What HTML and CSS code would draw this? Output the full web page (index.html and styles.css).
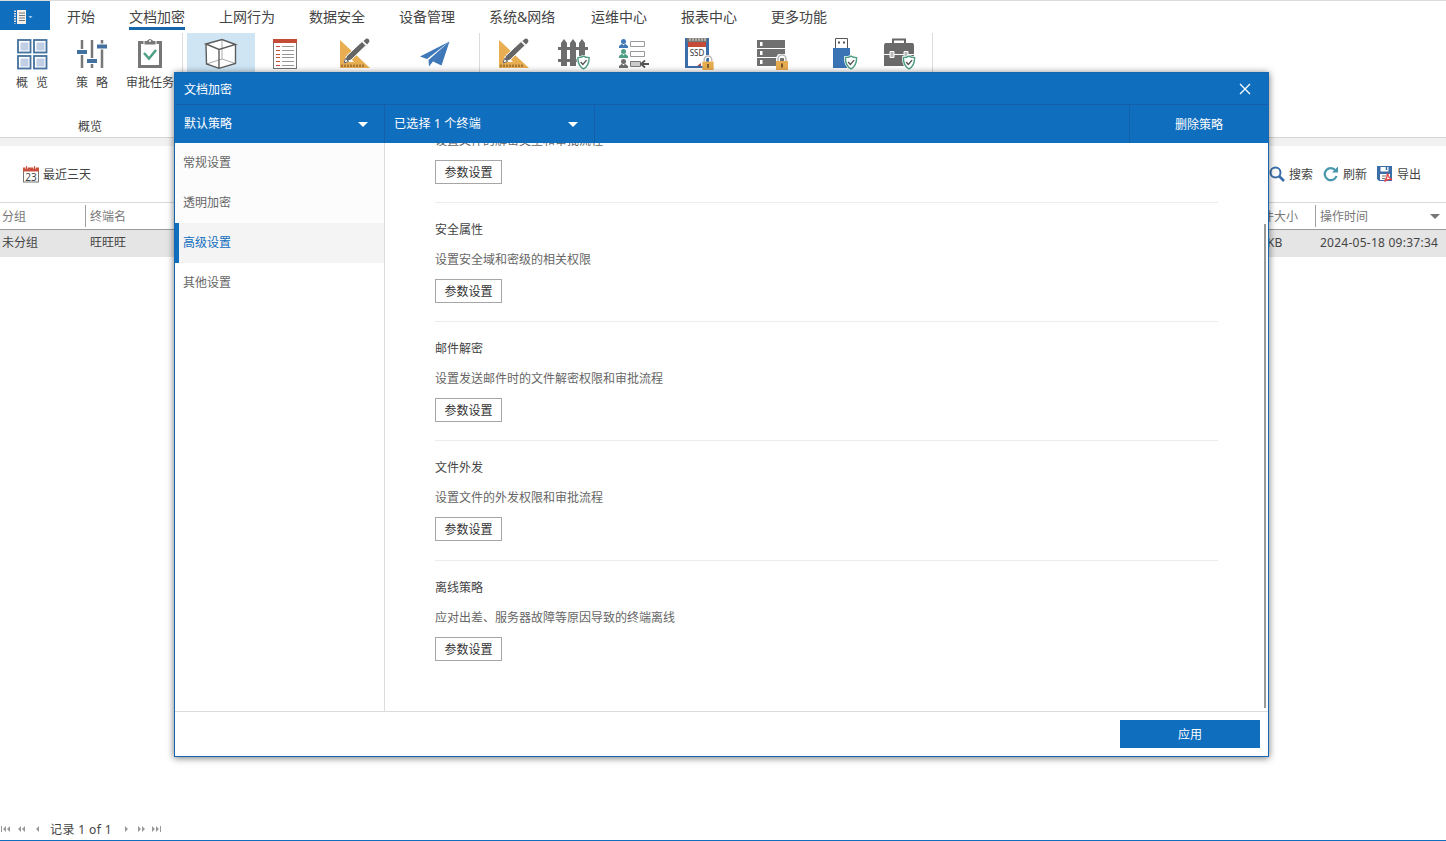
FILE: index.html
```html
<!DOCTYPE html>
<html lang="zh-CN">
<head>
    <meta charset="UTF-8">
    <meta name="viewport" content="width=device-width, initial-scale=1.0">
    <title>文档加密</title>
    <link rel="stylesheet" href="styles.css">
</head>
<body>
    <svg class="defs" width="0" height="0">
        <symbol id="design" viewBox="0 0 32 32">
            <path d="M1 2v28h30zM8 16l7 8H8z" fill="#e9ad52" fill-rule="evenodd"/>
            <path d="M3 29v-2.500M6 29v-2.500M9 29v-2.500M12 29v-2.500M15 29v-2.500M18 29v-2.500M21 29v-2.500M24 29v-2.500" stroke="#6b4b1c"/>
            <path d="M5 25l2.500-7L23 3.500l4 4L12 22z" fill="#666" stroke="#fff"/>
            <path d="M24.500 3l2.500-2.300q2-.5 3 1t0 2.500L28 6.500z" fill="#666"/>
            <path d="M5 25l1.500-4.500 3 3z" fill="#fff" stroke="#666"/>
        </symbol>
        <symbol id="shield" viewBox="0 0 16 16">
            <path d="M8 1.200c2 1.300 4 1.600 6 1.600 0 6-1.500 9.500-6 12-4.500-2.500-6-6-6-12 2 0 4-.3 6-1.600z" fill="#fff" stroke="#fff" stroke-width="3"/>
            <path d="M8 1.200c2 1.300 4 1.600 6 1.600 0 6-1.500 9.500-6 12-4.500-2.500-6-6-6-12 2 0 4-.3 6-1.600z" fill="#fff" stroke="#4f9f83" stroke-width="1.500"/>
            <path d="M5 7.500l2.300 2.500 4-4.500" fill="none" stroke="#555" stroke-width="1.500"/>
        </symbol>
        <symbol id="lock" viewBox="0 0 14 16">
            <path d="M3 7V5a4 4 0 0 1 8 0v2" fill="none" stroke="#fff" stroke-width="4"/>
            <path d="M3 7V5a4 4 0 0 1 8 0v2" fill="none" stroke="#bbb" stroke-width="1.600"/>
            <rect x="1" y="7" width="12" height="9" fill="#e8ad50"/>
            <path d="M7 9.500v4" stroke="#77592a" stroke-width="2"/>
        </symbol>
        <symbol id="person" viewBox="0 0 9 9">
            <circle cx="4.500" cy="2.500" r="2.500"/>
            <path d="M0 9V7l3-2.200 1.500 1.700L6 4.800 9 7v2z"/>
        </symbol>
    </svg>

    <div class="tabs">
        <div class="app-btn">
            <svg width="22" height="14" viewBox="0 0 22 14">
                <path d="M2 .5v13" stroke="#ddd" stroke-width="2" stroke-dasharray="1.500 1"/>
                <rect x="4" y="0" width="9" height="14" fill="#f5efe6"/>
                <path d="M6 3h6M6 5.500h6M6 8h6M6 10.500h6" stroke="#6d7884"/>
                <path d="M15.500 6h4l-2 2.500z" fill="#9cc4e8"/>
            </svg>
        </div>
        <span class="tab">开始</span>
        <span class="tab active">文档加密</span>
        <span class="tab">上网行为</span>
        <span class="tab">数据安全</span>
        <span class="tab">设备管理</span>
        <span class="tab wide">系统&amp;网络</span>
        <span class="tab">运维中心</span>
        <span class="tab">报表中心</span>
        <span class="tab">更多功能</span>
    </div>

    <div class="ribbon">
        <div class="group first">
            <div class="tools">
                <div class="tool w60">
                    <svg width="32" height="32" viewBox="0 0 32 32">
                        <g fill="#fff" stroke="#43719f" stroke-width="1.800">
                            <rect x="2" y="2" width="12.500" height="12.500"/><rect x="18" y="2" width="12.500" height="12.500"/>
                            <rect x="2" y="18" width="12.500" height="12.500"/><rect x="18" y="18" width="12.500" height="12.500"/>
                        </g>
                        <path d="M4.500 4.500h8v8h-8zM20.500 4.500h8v8h-8zM4.500 20.500h8v8h-8zM20.500 20.500h8v8h-8z" fill="#c0cfe6"/>
                    </svg>
                    <span class="spaced">概 览</span>
                </div>
                <div class="tool w60">
                    <svg width="32" height="32" viewBox="0 0 32 32">
                        <path d="M6 2v28M16 2v28M26 2v28" stroke="#777" stroke-width="2.500"/>
                        <path d="M1 14h10M11 23h10M21 8.500h10" stroke="#fff" stroke-width="6"/>
                        <path d="M1 14h10M11 23h10M21 8.500h10" stroke="#43719f" stroke-width="4"/>
                    </svg>
                    <span class="spaced">策 略</span>
                </div>
                <div class="tool w56">
                    <svg width="32" height="32" viewBox="0 0 32 32">
                        <path d="M5.500 4.500h21v24h-21z" fill="#fff" stroke="#777" stroke-width="3"/>
                        <path d="M10 2.500h3q3-4 6 0h3V7H10z" fill="#777" stroke="#fff"/>
                        <circle cx="16" cy="3" r="1" fill="#fff"/>
                        <path d="M10 15l5 5.500 7-8.500" fill="none" stroke="#4f9f83" stroke-width="2.500"/>
                    </svg>
                    <span>审批任务</span>
                </div>
            </div>
            <div class="group-name">概览</div>
        </div>
        <div class="group second">
            <div class="tool selected">
                <svg width="34" height="32" viewBox="0 0 34 32">
                    <path d="M2 6l16-4.500 13.500 5v19L15 30.300 2.500 26z" fill="#fff"/>
                    <path d="M18 2v19L2.500 26M18 21l13.500 4.500" fill="none" stroke="#aaa"/>
                    <path d="M2 6l16-4.500 13.500 5L15 11.500zM15 11.500v18.800M2 6l.5 20L15 30.300l16.500-4.800v-19" fill="none" stroke="#5d5d5d" stroke-width="1.400"/>
                </svg>
            </div>
            <div class="tool w60">
                <svg width="26" height="32" viewBox="0 0 26 32">
                    <rect x="1.500" y="2" width="23" height="28.500" fill="#fff" stroke="#777"/>
                    <path d="M1 1h24v4H1z" fill="#c44b38"/>
                    <path d="M4 8.500h4M4 12.500h4M4 16.500h4M4 19.500h4M4 23.500h4M4 27.500h4" stroke="#c44b38"/>
                    <path d="M10 8.500h12M10 12.500h12M10 16.500h12M10 19.500h12M10 23.500h12M10 27.500h12" stroke="#999"/>
                </svg>
            </div>
            <div class="tool w80"><svg width="32" height="32"><use href="#design"/></svg></div>
            <div class="tool w80">
                <svg width="32" height="32" viewBox="0 0 32 32">
                    <path d="M30.500 3.500L1 18.500l7 2.500zM30.500 3.500L9.500 22l.5 6.500 3.500-4.500zM30.500 3.500L14 23.500l8.500 4z" fill="#3f78b8"/>
                </svg>
            </div>
        </div>
        <div class="group third">
            <div class="tool w60"><svg width="32" height="32"><use href="#design"/></svg></div>
            <div class="tool w60">
                <svg width="34" height="32" viewBox="0 0 34 32">
                    <path d="M1 10.500h30M1 22.500h30" stroke="#6d6d6d" stroke-width="3"/>
                    <path d="M4 28V5l3-4 3 4v23zM13 28V5l3-4 3 4v23zM22 28V5l3-4 3 4v23z" fill="#6d6d6d"/>
                    <use href="#shield" x="19" y="17" width="15" height="15"/>
                </svg>
            </div>
            <div class="tool w60">
                <svg width="32" height="32" viewBox="0 0 32 32">
                    <use href="#person" x="1" y="1" width="9" height="9" fill="#3f78b8"/>
                    <use href="#person" x="1" y="11" width="9" height="9" fill="#4f9f83"/>
                    <use href="#person" x="1" y="21" width="9" height="9" fill="#6d6d6d"/>
                    <path d="M12.500 3.500h14v5h-14zM12.500 13.500h14v5h-14z" fill="#fff" stroke="#999"/>
                    <path d="M12.500 23.500h10v5h-10z" fill="#ccc" stroke="#777"/>
                    <path d="M31 26h-8M27 22.500L23 26l4 3.500" fill="none" stroke="#555" stroke-width="1.800"/>
                </svg>
            </div>
            <div class="tool w70">
                <svg width="32" height="34" viewBox="0 0 32 34">
                    <rect x="2" y="0" width="24" height="30" fill="#3b6da8"/>
                    <rect x="5" y="9" width="18" height="19" fill="#fff"/>
                    <rect x="4" y="0" width="20" height="4" fill="#777"/>
                    <path d="M7 0v3M10 0v3M13 0v3M16 0v3M19 0v3M22 0v3" stroke="#e8e0cf"/>
                    <rect x="5" y="4" width="18" height="5" fill="#c44b38"/>
                    <text class="ssd" x="14" y="18" text-anchor="middle">SSD</text>
                    <path d="M14 28l4-3v3z" fill="#a34a4a"/>
                    <use href="#lock" x="18" y="17" width="14" height="15"/>
                </svg>
            </div>
            <div class="tool w76">
                <svg width="34" height="34" viewBox="0 0 34 34">
                    <path d="M2 2h28v8H2zM2 11h28v8H2zM2 20h28v8H2z" fill="#707070"/>
                    <path d="M5 4h2.500v4H5zM5 13h2.500v4H5zM5 22h2.500v4H5z" fill="#fff"/>
                    <use href="#lock" x="20" y="16" width="14" height="16"/>
                </svg>
            </div>
            <div class="tool w70">
                <svg width="28" height="34" viewBox="0 0 28 34">
                    <path d="M4.500 10V.5h12V10" fill="#fff" stroke="#555"/>
                    <path d="M7 3.500h2v2H7zM12 3.500h2v2h-2z" fill="#555"/>
                    <rect x="2" y="10" width="17" height="20" fill="#3b74b4"/>
                    <use href="#shield" x="12" y="17" width="16" height="15"/>
                </svg>
            </div>
            <div class="tool w40">
                <svg width="34" height="34" viewBox="0 0 34 34">
                    <path d="M10 6V1.500h12V6" fill="none" stroke="#666" stroke-width="2"/>
                    <path d="M1 7l1-2h28l1 2v21H1z" fill="#6a6a6a"/>
                    <path d="M1 16.500h30" stroke="#fff"/>
                    <path d="M7 13.500h4v6H7zM21 13.500h4v6h-4z" fill="#bbb" stroke="#fff"/>
                    <use href="#shield" x="18" y="17" width="16" height="15"/>
                </svg>
            </div>
        </div>
    </div>

    <div class="toolbar">
        <div class="action range">
            <svg width="17" height="17" viewBox="0 0 17 17">
                <rect x="1.500" y="2.500" width="15" height="13.500" fill="#fff" stroke="#777"/>
                <path d="M1 1.500h16v4H1z" fill="#c9503e"/>
                <path d="M4.500 0v3M12.500 0v3" stroke="#fff" stroke-width="2"/>
                <path d="M4.500 0v3M12.500 0v3" stroke="#c9503e"/>
                <text class="day" x="9" y="14.500" text-anchor="middle">23</text>
            </svg>
            <span>最近三天</span>
        </div>
        <div class="actions">
            <div class="action">
                <svg width="16" height="16" viewBox="0 0 16 16">
                    <circle cx="6.500" cy="6.500" r="5" fill="none" stroke="#3a6fab" stroke-width="2"/>
                    <path d="M10 10l5 5" stroke="#3a6fab" stroke-width="2.600"/>
                </svg>
                <span>搜索</span>
            </div>
            <div class="action">
                <svg width="16" height="16" viewBox="0 0 16 16">
                    <path d="M12.500 4.500A6 6 0 1 0 13.500 10" fill="none" stroke="#4797ac" stroke-width="2.200"/>
                    <path d="M15 .5v6H9z" fill="#4797ac"/>
                </svg>
                <span>刷新</span>
            </div>
            <div class="action">
                <svg width="16" height="16" viewBox="0 0 16 16">
                    <path d="M0 0h15v15H2l-2-2z" fill="#3b6da8"/>
                    <path d="M3.500 1h8v4.500h-8zM3 8h10v6H3z" fill="#fff"/>
                    <path d="M9.500 1v3" stroke="#3b6da8" stroke-width="1.500"/>
                    <path d="M5 10h4M5 12.500h3" stroke="#777"/>
                    <path d="M10.500 7c0 4-1 6-3 8.500 2-2 4-2.500 7.500-2-2.500-1-4-3-4.500-6.500" fill="#fff" stroke="#e04545" stroke-width="1.300"/>
                </svg>
                <span>导出</span>
            </div>
        </div>
    </div>

    <div class="grid-row grid-head">
        <span class="col-group">分组</span>
        <span class="col-name">终端名</span>
        <span class="col-size">文件大小</span>
        <span class="col-time">操作时间 <i class="caret"></i></span>
    </div>
    <div class="grid-row grid-line">
        <span class="col-group">未分组</span>
        <span class="col-name">旺旺旺</span>
        <span class="col-size kb">KB</span>
        <span class="col-time">2024-05-18 09:37:34</span>
    </div>

    <div class="pager">
        <svg width="40" height="8" viewBox="0 0 40 8" fill="#999">
            <path d="M1 1h1v6H1zM6 1v6L3 4zM10 1v6L7 4zM21 1v6l-3-3zM25 1v6l-3-3zM39 1v6l-3-3z"/>
        </svg>
        <span>记录 1 of 1</span>
        <svg width="40" height="8" viewBox="0 0 40 8" fill="#999">
            <path d="M3 1v6l3-3zM16 1v6l3-3zM20 1v6l3-3zM30 1v6l3-3zM34 1v6l3-3zM38 1h1v6h-1z"/>
        </svg>
    </div>

    <div class="dialog">
        <div class="dialog-title">
            <span>文档加密</span>
            <svg width="12" height="12" viewBox="0 0 12 12"><path d="M1 1l10 10M11 1L1 11" stroke="#fff" stroke-width="1.300"/></svg>
        </div>
        <div class="dialog-bar">
            <div class="select policy">默认策略 <i class="caret"></i></div>
            <div class="select terminal"><span>已选择 1 个终端</span> <i class="caret"></i></div>
            <div class="delete">删除策略</div>
        </div>
        <div class="dialog-body">
            <div class="menu">
                <div class="menu-item soft">常规设置</div>
                <div class="menu-item soft">透明加密</div>
                <div class="menu-item active">高级设置</div>
                <div class="menu-item">其他设置</div>
            </div>
            <div class="content">
                <div class="section cut">
                    <p>设置文件的解密类型和审批流程</p>
                    <button>参数设置</button>
                </div>
                <div class="section">
                    <h3>安全属性</h3>
                    <p>设置安全域和密级的相关权限</p>
                    <button>参数设置</button>
                </div>
                <div class="section">
                    <h3>邮件解密</h3>
                    <p>设置发送邮件时的文件解密权限和审批流程</p>
                    <button>参数设置</button>
                </div>
                <div class="section tall">
                    <h3>文件外发</h3>
                    <p>设置文件的外发权限和审批流程</p>
                    <button>参数设置</button>
                </div>
                <div class="section last">
                    <h3>离线策略</h3>
                    <p>应对出差、服务器故障等原因导致的终端离线</p>
                    <button>参数设置</button>
                </div>
            </div>
            <div class="scroll"></div>
        </div>
        <div class="dialog-foot">
            <button class="apply">应用</button>
        </div>
    </div>
</body>
</html>
```
FILE: styles.css
```css
* {
    box-sizing: border-box;
}

body {
    margin: 0;
    height: 841px;
    overflow: hidden;
    position: relative;
    display: flex;
    flex-direction: column;
    background-color: #fff;
    border-top: 1px solid #dcdcdc;
    border-bottom: 1px solid #106ebe;
    font-family: "Noto Sans", "Noto Sans CJK SC", sans-serif;
    font-size: 12px;
    color: #444;
}

svg {
    display: block;
    flex: none;
}

.defs {
    position: absolute;
}

.tabs {
    display: flex;
    height: 29px;
    font-size: 14px;
    line-height: 32px;
}

.app-btn {
    width: 50px;
    height: 29px;
    margin-right: 17px;
    padding: 9px 0 0 13px;
    background-color: #106ebe;
}

.tab {
    height: 29px;
    margin-right: 34px;
    white-space: nowrap;
}

.tab.active {
    border-bottom: 3px solid #1567ab;
}

.tab.wide {
    width: 68px;
}

.ribbon {
    display: flex;
    height: 108px;
    padding-top: 3px;
    border-bottom: 1px solid #d5d5d5;
}

.group {
    display: flex;
    height: 101px;
    border-right: 1px solid #dcdcdc;
}

.group.first {
    width: 183px;
    flex-direction: column;
    justify-content: space-between;
    padding-left: 2px;
}

.group.second {
    width: 297px;
    padding-left: 4px;
}

.group.third {
    width: 453px;
    padding-left: 4px;
}

.tools {
    display: flex;
}

.group-name {
    width: 176px;
    line-height: 16px;
    margin-bottom: -1px;
    text-align: center;
}

.tool {
    display: flex;
    flex: none;
    flex-direction: column;
    align-items: center;
    padding-top: 5px;
    line-height: 16px;
    white-space: nowrap;
}

.tool span {
    margin-top: 5px;
}

.tool .spaced {
    word-spacing: 5px;
}

.selected {
    width: 68px;
    background-color: #cfe5f4;
}

.w40 { width: 40px; }
.w56 { width: 56px; }
.w60 { width: 60px; }
.w70 { width: 70px; }
.w76 { width: 76px; }
.w80 { width: 80px; }

.ssd {
    font-size: 8px;
    fill: #333;
}

.day {
    font-size: 10px;
    fill: #444;
}

.toolbar {
    display: flex;
    justify-content: space-between;
    align-items: center;
    height: 65px;
    padding: 0 25px 0 22px;
    border-top: 8px solid #f1f1f1;
    border-bottom: 1px solid #d9d9d9;
}

.action {
    display: flex;
    align-items: center;
    gap: 4px;
}

.actions {
    display: flex;
    gap: 10px;
}

.grid-row {
    display: flex;
    height: 27px;
    line-height: 27px;
    white-space: nowrap;
}

.grid-head {
    color: #777;
    border-bottom: 1px solid #979d9c;
}

.grid-head .col-group,
.grid-head .col-size {
    height: 22px;
    margin-top: 2px;
    line-height: 23px;
    border-right: 1px solid #a0a0a0;
}

.grid-line {
    background-color: #e5e5e5;
    line-height: 25px;
}

.col-group {
    width: 86px;
    padding-left: 2px;
}

.col-name {
    flex: 1;
    padding-left: 4px;
}

.col-size {
    width: 66px;
}

.kb {
    padding-left: 17px;
}

.col-time {
    width: 130px;
    padding: 0 6px 0 4px;
    display: flex;
    justify-content: space-between;
    letter-spacing: 0.25px;
}

.grid-head .col-time {
    align-items: center;
    letter-spacing: 0;
}

.caret {
    border: 5px solid transparent;
    border-top-color: currentColor;
    border-bottom: none;
}

.pager {
    display: flex;
    align-items: center;
    gap: 10px;
    height: 22px;
    margin-top: auto;
}

.pager span {
    width: 62px;
    letter-spacing: 0.4px;
    white-space: nowrap;
}

.dialog {
    position: absolute;
    left: 174px;
    top: 71px;
    width: 1095px;
    height: 685px;
    display: flex;
    flex-direction: column;
    background-color: #fff;
    border: 1px solid #1767ae;
    box-shadow: 0 1px 7px rgba(0, 0, 0, 0.55);
}

.dialog-title {
    display: flex;
    justify-content: space-between;
    align-items: center;
    height: 31px;
    padding: 0 17px 0 9px;
    background-color: #106ebe;
    color: #fff;
}

.dialog-bar {
    display: flex;
    height: 39px;
    background-color: #106ebe;
    border-top: 1px solid #1560ad;
    color: #fff;
    line-height: 40px;
}

.select {
    display: flex;
    width: 210px;
    justify-content: space-between;
    align-items: center;
    padding: 0 16px 0 9px;
    border-right: 1px solid #1560ad;
}

.terminal span {
    letter-spacing: 0.2px;
}

.delete {
    width: 139px;
    margin-left: auto;
    border-left: 1px solid #1560ad;
    text-align: center;
}

.dialog-body {
    display: flex;
    height: 569px;
    overflow: hidden;
    border-bottom: 1px solid #dcdcdc;
}

.menu {
    width: 210px;
    border-right: 1px solid #dcdcdc;
}

.menu-item {
    height: 40px;
    padding-left: 8px;
    line-height: 40px;
    color: #666;
}

.menu-item.soft {
    background-color: #fcfcfc;
}

.menu-item.active {
    padding-left: 4px;
    border-left: 4px solid #106ebe;
    background-color: #f4f4f4;
    color: #106ebe;
}

.content {
    flex: 1;
    padding: 0 46px 0 50px;
}

.section {
    height: 119px;
    padding-top: 17px;
    border-bottom: 1px solid #ececec;
}

/* scrolled half out of view under the blue bar */
.section.cut {
    height: 72px;
    margin-top: -12px;
    padding-top: 0;
}

.section.tall {
    height: 120px;
}

.section.last {
    border-bottom: none;
}

.section h3 {
    margin: 0 0 10px;
    font-size: 12px;
    font-weight: normal;
    line-height: 20px;
}

.section p {
    margin: 0 0 9px;
    line-height: 20px;
    color: #666;
}

button {
    display: block;
    width: 67px;
    height: 24px;
    padding: 0;
    background-color: #fff;
    border: 1px solid #a6a6a6;
    font-family: inherit;
    font-size: 12px;
    color: #333;
}

.scroll {
    width: 2px;
    height: 484px;
    margin: 81px 2px 0 0;
    background-color: #999;
}

.dialog-foot {
    display: flex;
    justify-content: flex-end;
    padding: 8px;
}

.apply {
    width: 140px;
    height: 28px;
    border: none;
    background-color: #106ebe;
    color: #fff;
}
```
